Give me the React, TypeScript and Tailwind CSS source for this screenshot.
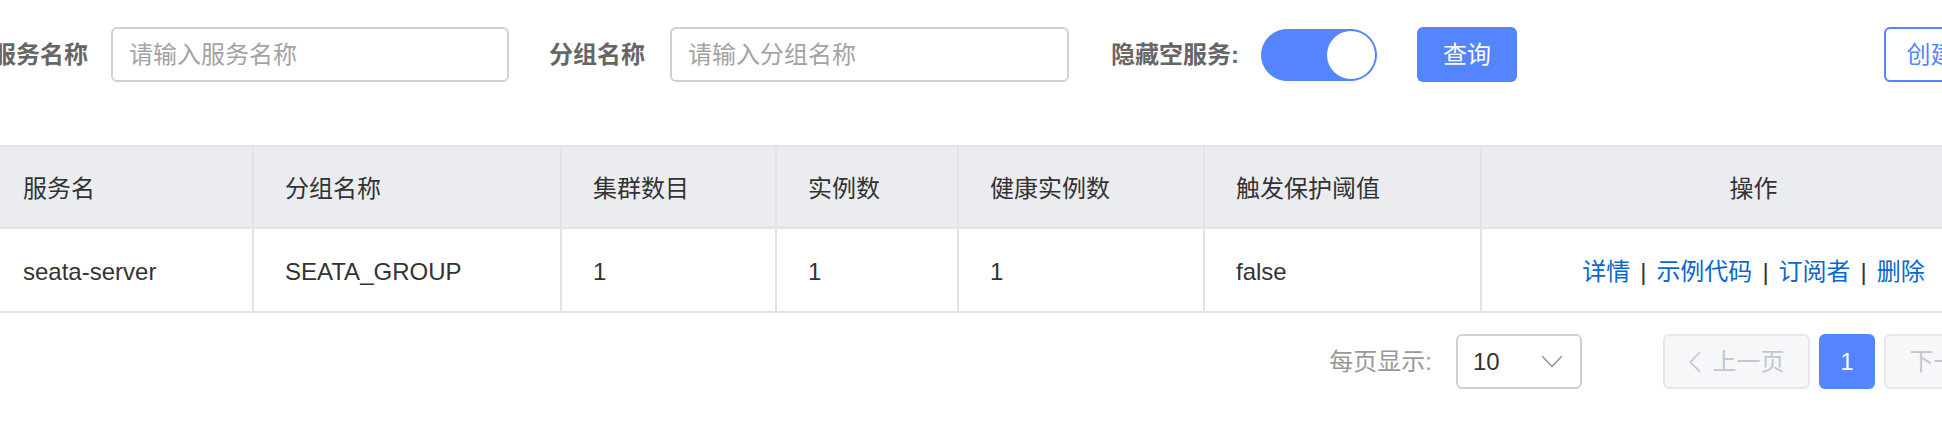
import React from "react";

const FONT = "font-['Liberation_Sans','Noto_Sans_CJK_SC',sans-serif]";

function Chevron({ className }: { className?: string }) {
  return (
    <svg className={className} viewBox="0 0 22 13" fill="none" stroke="currentColor" strokeWidth="1.6">
      <polyline points="1,1 11,11.5 21,1" />
    </svg>
  );
}

function LeftChevron({ className }: { className?: string }) {
  return (
    <svg className={className} viewBox="0 0 12 22" fill="none" stroke="currentColor" strokeWidth="1.8">
      <polyline points="11,1 1.5,11 11,21" />
    </svg>
  );
}

const headers = ["服务名", "分组名称", "集群数目", "实例数", "健康实例数", "触发保护阈值", "操作"];
const widths = ["w-[262px]", "w-[308px]", "w-[215px]", "w-[182px]", "w-[246px]", "w-[277px]", "flex-1"];
const row = ["seata-server", "SEATA_GROUP", "1", "1", "1", "false"];

export default function App() {
  return (
    <div className={`w-[1942px] h-[436px] overflow-hidden bg-white ${FONT}`}>
      <div className="w-[2033px] -ml-[8px]">
        {/* filter row */}
        <div className="flex items-center h-[55px] mt-[27px]">
          <span className="w-[96px] text-[24px] font-bold text-[#666666] whitespace-nowrap">服务名称</span>
          <div className="ml-[23px] w-[398px] h-[55px] border-2 border-[#cdd0d6] rounded-[6px] flex items-center pl-[16px] text-[24px] text-[#a3a3a3]">
            请输入服务名称
          </div>
          <span className="ml-[40px] w-[96px] text-[24px] font-bold text-[#666666] whitespace-nowrap">分组名称</span>
          <div className="ml-[25px] w-[399px] h-[55px] border-2 border-[#cdd0d6] rounded-[6px] flex items-center pl-[16px] text-[24px] text-[#a3a3a3]">
            请输入分组名称
          </div>
          <span className="ml-[42px] w-[125px] text-[24px] font-bold text-[#666666] whitespace-nowrap">隐藏空服务:</span>
          <div className="ml-[25px] w-[116px] h-[52px] rounded-full bg-[#5584ff] border border-[#5584ff] flex items-center justify-end pr-[1px]">
            <div className="w-[48px] h-[48px] rounded-full bg-white" />
          </div>
          <button className="ml-[40px] w-[100px] h-[55px] rounded-[6px] bg-[#5584ff] text-white text-[24px] flex items-center justify-center">
            查询
          </button>
          <button className="ml-auto w-[141px] h-[55px] rounded-[6px] border-2 border-[#5584ff] bg-white text-[#5584ff] text-[24px] flex items-center justify-center whitespace-nowrap">
            创建服务
          </button>
        </div>

        {/* table */}
        <div className="mt-[63px] border-t-2 border-b-2 border-[#e2e3e7]">
          <div className="flex h-[82px] bg-[#ebecf0] border-b-2 border-[#e2e3e7]">
            {headers.map((h, i) => (
              <div
                key={h}
                className={`${widths[i]} h-full flex items-center pt-[3px] text-[24px] text-[#333333] ${
                  i < headers.length - 1 ? "border-r-2 border-[#e2e3e7]" : ""
                } ${i === headers.length - 1 ? "justify-center" : "pl-[31px]"}`}
              >
                {h}
              </div>
            ))}
          </div>
          <div className="flex h-[82px] bg-white">
            {row.map((c, i) => (
              <div
                key={i}
                className={`${widths[i]} h-full flex items-center pt-[4px] pl-[31px] text-[24px] text-[#333333] border-r-2 border-[#e2e3e7]`}
              >
                {c}
              </div>
            ))}
            <div className="flex-1 h-full flex items-center justify-center pt-[4px] text-[24px] whitespace-nowrap">
              <span className="text-[#0a67d0]">详情</span>
              <span className="mx-[10px] text-[#333333]">|</span>
              <span className="text-[#0a67d0]">示例代码</span>
              <span className="mx-[10px] text-[#333333]">|</span>
              <span className="text-[#0a67d0]">订阅者</span>
              <span className="mx-[10px] text-[#333333]">|</span>
              <span className="text-[#0a67d0]">删除</span>
            </div>
          </div>
        </div>

        {/* pagination */}
        <div className="mt-[21px] flex items-center justify-end h-[55px] -mr-[6px]">
          <span className="text-[24px] text-[#999999] whitespace-nowrap">每页显示:</span>
          <div className="ml-[24px] w-[126px] h-[55px] border-2 border-[#cdd0d6] rounded-[6px] flex items-center pl-[15px] pr-[17px] justify-between">
            <span className="text-[24px] text-[#333333]">10</span>
            <Chevron className="w-[22px] h-[13px] text-[#999999]" />
          </div>
          <div className="ml-[81px] w-[147px] h-[55px] border-2 border-[#e6e7eb] bg-[#f6f7f9] rounded-[6px] flex items-center justify-center text-[24px] text-[#c4c6cf]">
            <LeftChevron className="w-[12px] h-[22px] text-[#c4c6cf] mr-[12px]" />
            上一页
          </div>
          <div className="ml-[9px] w-[56px] h-[55px] rounded-[6px] bg-[#5584ff] text-white text-[24px] flex items-center justify-center">
            1
          </div>
          <div className="ml-[9px] w-[147px] h-[55px] border-2 border-[#e6e7eb] bg-[#f6f7f9] rounded-[6px] flex items-center justify-center text-[24px] text-[#c4c6cf]">
            下一页
            <svg className="w-[12px] h-[22px] ml-[12px]" viewBox="0 0 12 22" fill="none" stroke="currentColor" strokeWidth="1.8">
              <polyline points="1,1 10.5,11 1,21" />
            </svg>
          </div>
        </div>
      </div>
    </div>
  );
}
